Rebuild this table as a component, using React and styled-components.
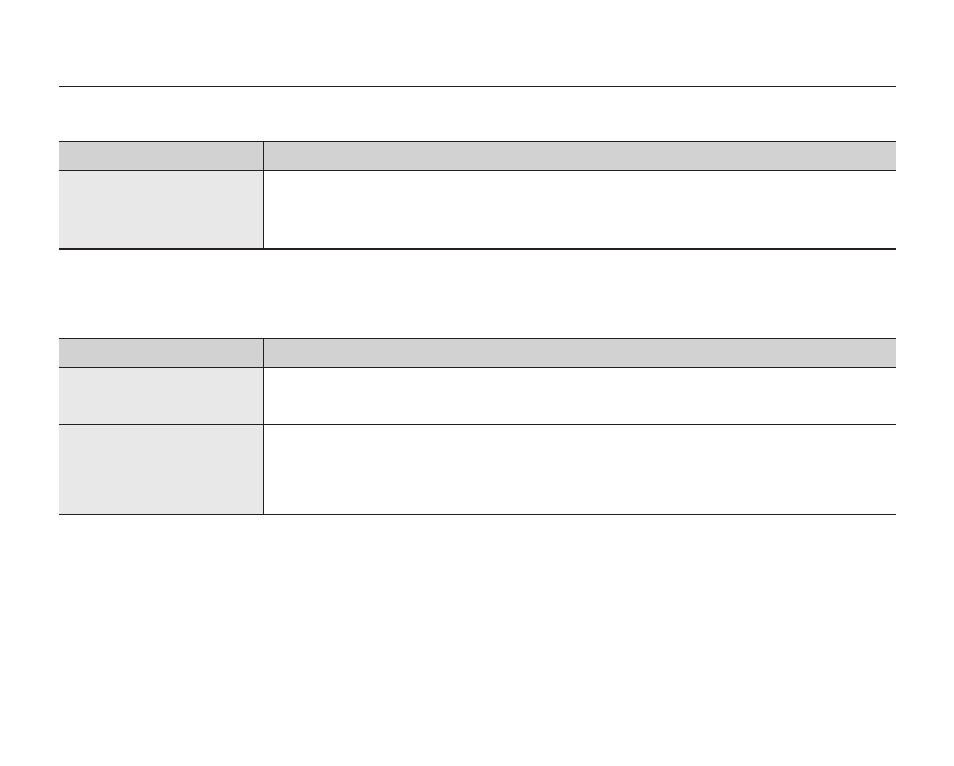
import React from 'react'
import styled, { createGlobalStyle } from 'styled-components'

const GlobalStyle = createGlobalStyle`
  html, body {
    margin: 0;
    padding: 0;
    background: #ffffff;
    font-family: "Liberation Sans", Arial, sans-serif;
  }
`

const Page = styled.div`
  width: 837px;
  padding: 86px 0 0 59px;
`

const Rule = styled.hr`
  margin: 0;
  border: 0;
  border-top: 1px solid #231f20;
`

const Table = styled.div`
  margin-top: ${p => p.$gap}px;
  display: grid;
  grid-template-columns: 205px 1fr;
  border-top: 1px solid #231f20;
  border-bottom: ${p => p.$thick ? 2 : 1}px solid #231f20;
`

const HeadCell = styled.div`
  height: 28px;
  background: #d2d2d2;
  border-bottom: 1px solid #231f20;
  ${p => p.$first && 'border-right: 1px solid #231f20;'}
`

const Cell = styled.div`
  height: ${p => p.$h}px;
  background: ${p => p.$first ? '#e8e8e8' : '#ffffff'};
  ${p => p.$first && 'border-right: 1px solid #231f20;'}
  ${p => !p.$last && 'border-bottom: 1px solid #231f20;'}
`

const TableBlock = ({ gap, thick, rows }) => (
  <Table $gap={gap} $thick={thick}>
    <HeadCell $first />
    <HeadCell />
    {rows.map((h, i) => (
      <React.Fragment key={i}>
        <Cell $first $h={h} $last={i === rows.length - 1} />
        <Cell $h={h} $last={i === rows.length - 1} />
      </React.Fragment>
    ))}
  </Table>
)

export default function App() {
  return (
    <>
      <GlobalStyle />
      <Page>
        <Rule />
        <TableBlock gap={54} thick rows={[77]} />
        <TableBlock gap={88} rows={[56, 89]} />
      </Page>
    </>
  )
}
